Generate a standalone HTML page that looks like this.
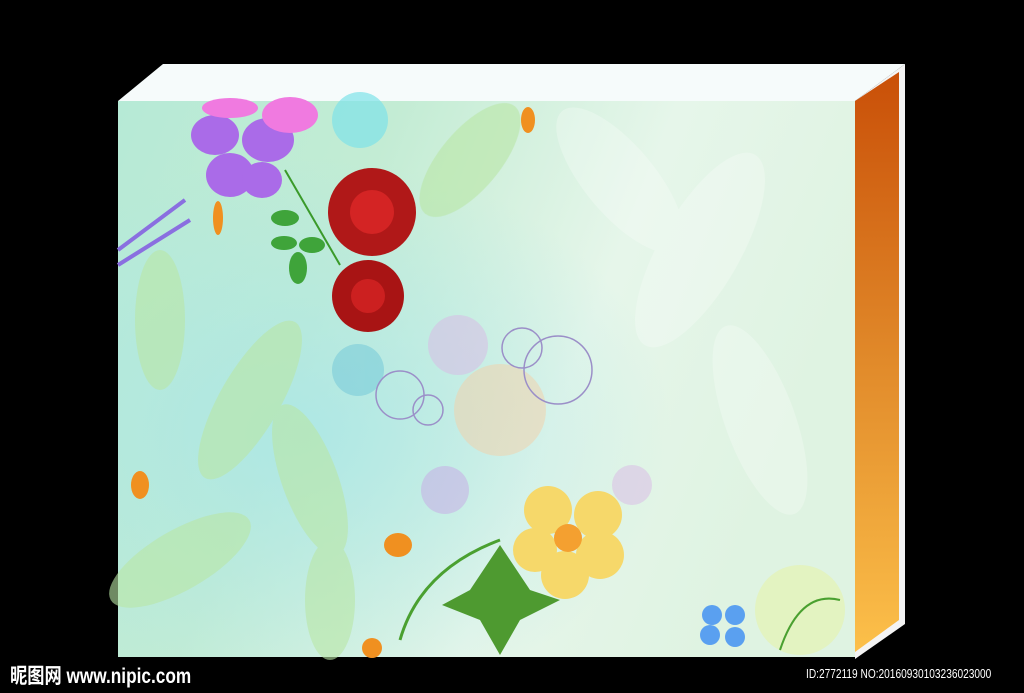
<!DOCTYPE html>
<html><head><meta charset="utf-8"><style>
html,body{margin:0;padding:0;background:#000;width:1024px;height:693px;overflow:hidden}
.wm{position:absolute;left:10px;top:660px;color:#fff;font:bold 21px "Liberation Sans","Noto Sans CJK SC",sans-serif;transform:scaleX(0.82);transform-origin:0 0;white-space:nowrap}
.id{position:absolute;left:806px;top:666px;color:#fff;font:13px "Liberation Sans",sans-serif;transform:scaleX(0.78);transform-origin:0 0;white-space:nowrap}
</style></head><body>
<svg width="1024" height="693" style="position:absolute;left:0;top:0">
<defs>
<linearGradient id="fg" x1="0" y1="0" x2="1" y2="0.3">
<stop offset="0" stop-color="#b6ead6"/><stop offset="0.35" stop-color="#c3ecd4"/><stop offset="0.7" stop-color="#e6f6ea"/><stop offset="1" stop-color="#dff3e2"/></linearGradient>
<linearGradient id="og" x1="0" y1="0" x2="0" y2="1">
<stop offset="0" stop-color="#c94f08"/><stop offset="0.5" stop-color="#e18a2a"/><stop offset="1" stop-color="#fcc04a"/></linearGradient>
<radialGradient id="cy" cx="0.25" cy="0.6" r="0.5"><stop offset="0" stop-color="#a8e6e8" stop-opacity=".8"/><stop offset="1" stop-color="#a8e6e8" stop-opacity="0"/></radialGradient>
</defs>
<polygon points="118,101 163,64 905,64 855,101" fill="#f6fbfb"/>
<polygon points="855,101 905,64 905,624 855,659" fill="#f4f4f4"/>
<polygon points="855,101 899,72 899,620 855,652" fill="url(#og)"/>
<rect x="118" y="101" width="737" height="556" fill="url(#fg)"/>
<rect x="118" y="101" width="737" height="556" fill="url(#cy)"/>
<g fill="#b9e6a6" opacity=".6">
<ellipse cx="250" cy="400" rx="30" ry="90" transform="rotate(30 250 400)"/>
<ellipse cx="310" cy="480" rx="28" ry="80" transform="rotate(-20 310 480)"/>
<ellipse cx="180" cy="560" rx="30" ry="80" transform="rotate(60 180 560)"/>
<ellipse cx="470" cy="160" rx="30" ry="70" transform="rotate(40 470 160)"/>
<ellipse cx="160" cy="320" rx="25" ry="70"/>
<ellipse cx="330" cy="600" rx="25" ry="60"/>
</g>
<g fill="#fff" opacity=".25">
<ellipse cx="700" cy="250" rx="40" ry="110" transform="rotate(30 700 250)"/>
<ellipse cx="620" cy="180" rx="35" ry="90" transform="rotate(-40 620 180)"/>
<ellipse cx="760" cy="420" rx="35" ry="100" transform="rotate(-20 760 420)"/>
</g>
<g opacity=".5">
<circle cx="358" cy="370" r="26" fill="#6fc6d8"/>
<circle cx="458" cy="345" r="30" fill="#d9b8e6"/>
<circle cx="500" cy="410" r="46" fill="#f4d0a8"/>
<circle cx="445" cy="490" r="24" fill="#c7a8e6"/>
<circle cx="632" cy="485" r="20" fill="#d9b8e6"/>
<circle cx="800" cy="610" r="45" fill="#e8f3a0"/>
</g>
<g fill="none" stroke="#9b8fc8" stroke-width="1.5">
<circle cx="400" cy="395" r="24"/><circle cx="428" cy="410" r="15"/>
<circle cx="522" cy="348" r="20"/><circle cx="558" cy="370" r="34"/>
</g>
<g fill="#aa6be8"><ellipse cx="215" cy="135" rx="24" ry="20"/><ellipse cx="268" cy="140" rx="26" ry="22"/><ellipse cx="230" cy="175" rx="24" ry="22"/><ellipse cx="262" cy="180" rx="20" ry="18"/></g>
<g fill="#f07ae0"><ellipse cx="230" cy="108" rx="28" ry="10"/><ellipse cx="290" cy="115" rx="28" ry="18"/></g>
<circle cx="360" cy="120" r="28" fill="#7fe3e8" opacity=".7"/>
<path d="M285 170 L340 265" stroke="#3a9a2a" stroke-width="2"/>
<g fill="#3fa43a"><ellipse cx="285" cy="218" rx="14" ry="8"/><ellipse cx="312" cy="245" rx="13" ry="8"/><ellipse cx="298" cy="268" rx="9" ry="16"/><ellipse cx="284" cy="243" rx="13" ry="7"/></g>
<circle cx="372" cy="212" r="44" fill="#b01818"/><circle cx="372" cy="212" r="22" fill="#d42424"/>
<circle cx="368" cy="296" r="36" fill="#a81414"/><circle cx="368" cy="296" r="17" fill="#cc2020"/>
<g fill="#f6d86a"><circle cx="548" cy="510" r="24"/><circle cx="598" cy="515" r="24"/><circle cx="535" cy="550" r="22"/><circle cx="600" cy="555" r="24"/><circle cx="565" cy="575" r="24"/></g>
<circle cx="568" cy="538" r="14" fill="#f4a030"/>
<polygon points="500,545 530,590 560,600 520,620 500,655 480,620 442,605 470,590" fill="#4e9a30"/>
<g fill="#5aa0f0"><circle cx="712" cy="615" r="10"/><circle cx="735" cy="615" r="10"/><circle cx="710" cy="635" r="10"/><circle cx="735" cy="637" r="10"/></g>
<g fill="#f09020"><ellipse cx="528" cy="120" rx="7" ry="13"/><ellipse cx="140" cy="485" rx="9" ry="14"/><ellipse cx="218" cy="218" rx="5" ry="17"/><ellipse cx="372" cy="648" rx="10" ry="10"/><ellipse cx="398" cy="545" rx="14" ry="12"/></g>
<path d="M400 640 Q420 570 500 540" stroke="#4aa030" stroke-width="3" fill="none"/>
<path d="M780 650 Q800 590 840 600" stroke="#4aa030" stroke-width="2" fill="none"/>
<path d="M118 250 L185 200 M118 265 L190 220" stroke="#8a6fe0" stroke-width="4"/>
</svg>
<div class="wm">昵图网 www.nipic.com</div>
<div class="id">ID:2772119 NO:20160930103236023000</div>
</body></html>
